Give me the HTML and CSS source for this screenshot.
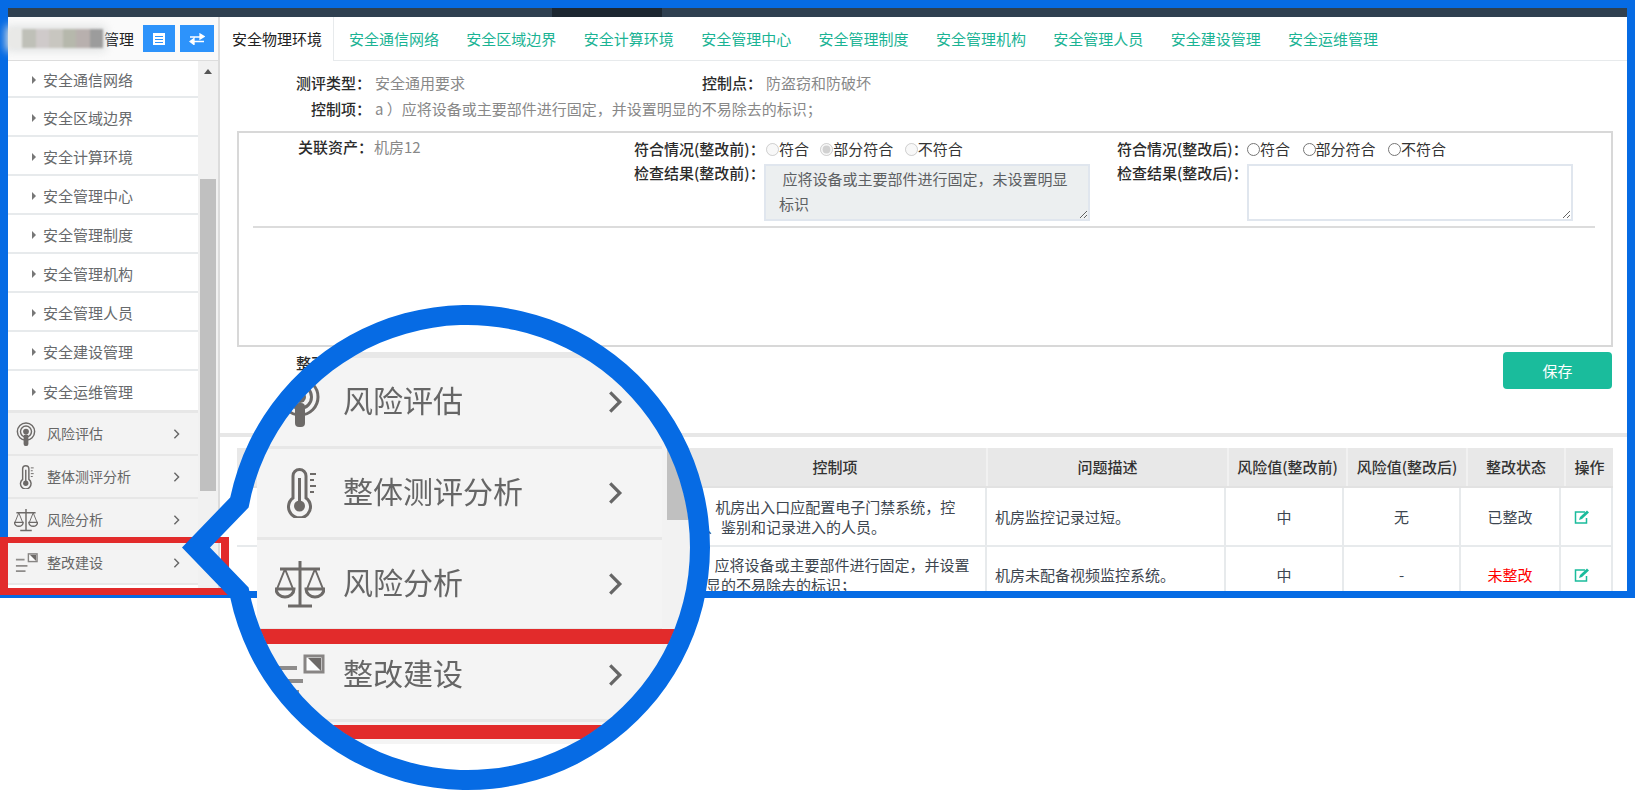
FILE: index.html
```html
<!DOCTYPE html>
<html lang="zh">
<head>
<meta charset="utf-8">
<title>整改建设</title>
<link rel="stylesheet" href="styles.css">
</head>
<body>
<svg class="defs" width="0" height="0" aria-hidden="true">
  <symbol id="i-pod" viewBox="0 0 50 50">
    <circle cx="25" cy="20" r="18" fill="none" stroke="currentColor" stroke-width="3"/>
    <circle cx="25" cy="20" r="11.5" fill="none" stroke="currentColor" stroke-width="3"/>
    <circle cx="25" cy="20" r="6" fill="currentColor"/>
    <rect x="20" y="26" width="10" height="24" rx="4" fill="currentColor"/>
  </symbol>
  <symbol id="i-thermo" viewBox="0 0 50 50">
    <path d="M18 30V8a6.500 6.500 0 0 1 13 0v22a11 11 0 1 1-13 0z" fill="none" stroke="currentColor" stroke-width="3"/>
    <circle cx="24.500" cy="38" r="5.500" fill="currentColor"/>
    <path d="M24.500 10v26" stroke="currentColor" stroke-width="3"/>
    <path d="M35 6h6M35 12h4M35 18h6M35 24h4" stroke="currentColor" stroke-width="2"/>
  </symbol>
  <symbol id="i-scale" viewBox="0 0 50 50">
    <path d="M25 2v44M13 47h24M5 10h40" stroke="currentColor" stroke-width="3" fill="none"/>
    <path d="M10 10L2 30M10 10l8 20M40 10l-8 20M40 10l8 20" stroke="currentColor" stroke-width="2" fill="none"/>
    <path d="M1 30h18a9 8 0 0 1-18 0zM31 30h18a9 8 0 0 1-18 0z" fill="none" stroke="currentColor" stroke-width="3"/>
  </symbol>
  <symbol id="i-list" viewBox="0 0 50 50">
    <path d="M4 18h18M4 31h24M4 42h20" stroke="currentColor" stroke-width="4" opacity=".75"/>
    <rect x="30" y="6" width="18" height="16" fill="#fff" stroke="currentColor" stroke-width="3" opacity=".8"/>
    <path d="M33 8h13v13z" fill="currentColor"/>
  </symbol>
  <symbol id="i-chev" viewBox="0 0 10 16">
    <polyline points="2,2 8,8 2,14" fill="none" stroke="currentColor" stroke-width="2"/>
  </symbol>
  <symbol id="i-edit" viewBox="0 0 16 14">
    <path d="M11 2H1.500v11h11V8" fill="none" stroke="currentColor" stroke-width="1.500"/>
    <path d="M5 10l1-3 7-6.500 2 2L8 9z" fill="currentColor"/>
  </symbol>
</svg>

<div class="page">
  <div class="frame">
    <div class="topbar"><span class="topbar-dark"></span></div>
    <div class="app">
      <aside class="sidebar">
        <header class="side-head">
          <div class="mosaic" aria-hidden="true">
            <i class="m0"></i><i class="m1"></i><i class="m2"></i><i class="m3"></i><i class="m4"></i><i class="m5"></i><i class="m6"></i>
          </div>
          <span class="side-title">管理</span>
          <div class="side-btns">
            <button class="sbtn sbtn-a" type="button" aria-label="列表">
              <svg viewBox="0 0 14 14" width="14" height="14"><rect x="1" y="1" width="12" height="12" fill="#fff"/><path d="M3 4.500h8M3 7.500h8M3 10.500h8" stroke="#2d93fb" stroke-width="1"/></svg>
            </button>
            <button class="sbtn sbtn-b" type="button" aria-label="切换">
              <svg viewBox="0 0 16 12" width="16" height="12"><path d="M1 4h12M11 1v5l4-2.500zM15 8.500H3M5 5.500v6L1 8.500z" stroke="#fff" stroke-width="1.300" fill="#fff"/></svg>
            </button>
          </div>
        </header>
        <div class="side-scroll">
          <nav class="menu">
            <ul class="sublist">
              <li class="sub sub-first"><span class="tri"></span>安全通信网络</li>
              <li class="sub"><span class="tri"></span>安全区域边界</li>
              <li class="sub"><span class="tri"></span>安全计算环境</li>
              <li class="sub"><span class="tri"></span>安全管理中心</li>
              <li class="sub"><span class="tri"></span>安全管理制度</li>
              <li class="sub"><span class="tri"></span>安全管理机构</li>
              <li class="sub"><span class="tri"></span>安全管理人员</li>
              <li class="sub"><span class="tri"></span>安全建设管理</li>
              <li class="sub"><span class="tri"></span>安全运维管理</li>
            </ul>
            <ul class="mainlist">
              <li class="item"><svg class="item-ic"><use href="#i-pod"/></svg><span class="item-tx">风险评估</span><svg class="item-ch"><use href="#i-chev"/></svg></li>
              <li class="item"><svg class="item-ic"><use href="#i-thermo"/></svg><span class="item-tx">整体测评分析</span><svg class="item-ch"><use href="#i-chev"/></svg></li>
              <li class="item"><svg class="item-ic"><use href="#i-scale"/></svg><span class="item-tx">风险分析</span><svg class="item-ch"><use href="#i-chev"/></svg></li>
              <li class="item"><svg class="item-ic"><use href="#i-list"/></svg><span class="item-tx">整改建设</span><svg class="item-ch"><use href="#i-chev"/></svg></li>
            </ul>
          </nav>
          <div class="track">
            <span class="track-up"></span>
            <span class="thumb"></span>
          </div>
        </div>
      </aside>

      <main class="main">
        <nav class="tabs">
          <a class="tab tab-active">安全物理环境</a>
          <a class="tab">安全通信网络</a>
          <a class="tab">安全区域边界</a>
          <a class="tab">安全计算环境</a>
          <a class="tab">安全管理中心</a>
          <a class="tab">安全管理制度</a>
          <a class="tab">安全管理机构</a>
          <a class="tab">安全管理人员</a>
          <a class="tab">安全建设管理</a>
          <a class="tab">安全运维管理</a>
        </nav>

        <section class="info">
          <div class="info-row">
            <span class="lab lab-a">测评类型：</span><span class="val val-a">安全通用要求</span>
            <span class="lab">控制点：</span><span class="val">防盗窃和防破坏</span>
          </div>
          <div class="info-row">
            <span class="lab lab-a">控制项：</span><span class="val">a ）应将设备或主要部件进行固定，并设置明显的不易除去的标识；</span>
          </div>
        </section>

        <section class="box">
          <div class="box-cols">
            <div class="col-asset"><span class="lab">关联资产：</span><span class="val">机房12</span></div>
            <div class="col-form col-before">
              <div class="form-row">
                <span class="lab form-lab">符合情况(整改前)：</span>
                <label class="opt opt-off"><input type="radio" name="b" disabled>符合</label>
                <label class="opt opt-off"><input type="radio" name="b" checked disabled>部分符合</label>
                <label class="opt opt-off"><input type="radio" name="b" disabled>不符合</label>
              </div>
              <div class="form-row form-row-b">
                <span class="lab form-lab">检查结果(整改前)：</span>
                <textarea class="ta ta-off" readonly> 应将设备或主要部件进行固定，未设置明显标识</textarea>
              </div>
            </div>
            <div class="col-form">
              <div class="form-row">
                <span class="lab form-lab">符合情况(整改后)：</span>
                <label class="opt opt-on"><input type="radio" name="a">符合</label>
                <label class="opt opt-on"><input type="radio" name="a">部分符合</label>
                <label class="opt opt-on"><input type="radio" name="a">不符合</label>
              </div>
              <div class="form-row form-row-b">
                <span class="lab form-lab">检查结果(整改后)：</span>
                <textarea class="ta"></textarea>
              </div>
            </div>
          </div>
          <hr class="box-hr">
        </section>

        <section class="advice">
          <span class="lab">整改建议：</span>
          <button class="save" type="button">保存</button>
        </section>

        <div class="divider"></div>

        <section class="tables">
          <table class="thead-t">
            <colgroup><col class="h1"><col class="h2"><col class="h3"><col class="h4"><col class="h5"><col class="h6"><col class="h7"><col class="h8"></colgroup>
            <tr><th></th><th></th><th>控制项</th><th>问题描述</th><th>风险值(整改前)</th><th>风险值(整改后)</th><th>整改状态</th><th>操作</th></tr>
          </table>
          <table class="tbody-t">
            <colgroup><col class="b1"><col class="b2"><col class="b3"><col class="b4"><col class="b5"><col class="b6"><col class="b7"><col class="b8"></colgroup>
            <tr>
              <td></td><td></td>
              <td class="tl">d）机房出入口应配置电子门禁系统，控制、鉴别和记录进入的人员。</td>
              <td class="tl">机房监控记录过短。</td>
              <td>中</td><td>无</td><td>已整改</td>
              <td class="op"><svg class="edit"><use href="#i-edit"/></svg></td>
            </tr>
            <tr>
              <td></td><td></td>
              <td class="tl">a）应将设备或主要部件进行固定，并设置明显的不易除去的标识；</td>
              <td class="tl">机房未配备视频监控系统。</td>
              <td>中</td><td>-</td><td class="bad">未整改</td>
              <td class="op"><svg class="edit"><use href="#i-edit"/></svg></td>
            </tr>
          </table>
        </section>
      </main>
    </div>
  </div>

  <div class="redbox"></div>

  <div class="lens">
    <div class="lens-menu">
      <div class="lens-top"></div>
      <div class="lens-row"><svg class="lens-ic"><use href="#i-pod"/></svg><span class="lens-tx">风险评估</span><svg class="lens-ch"><use href="#i-chev"/></svg></div>
      <div class="lens-row"><svg class="lens-ic"><use href="#i-thermo"/></svg><span class="lens-tx">整体测评分析</span><svg class="lens-ch"><use href="#i-chev"/></svg></div>
      <div class="lens-row"><svg class="lens-ic"><use href="#i-scale"/></svg><span class="lens-tx">风险分析</span><svg class="lens-ch"><use href="#i-chev"/></svg></div>
      <div class="lens-row"><svg class="lens-ic"><use href="#i-list"/></svg><span class="lens-tx">整改建设</span><svg class="lens-ch"><use href="#i-chev"/></svg></div>
      <div class="lens-foot"></div>
    </div>
    <div class="lens-track"><span class="lens-thumb"></span></div>
    <div class="lens-red"></div>
  </div>

  <svg class="ring" viewBox="0 0 1635 791" aria-hidden="true">
    <path fill-rule="evenodd" d="M230.200 497.500A242.500 242.500 0 1 1 230.200 597.500L182 547.500ZM248.600 507.500A222.500 222.500 0 1 1 248.600 587.500L210 547.500Z"/>
  </svg>
</div>
</body>
</html>
```

FILE: styles.css
```css
* { box-sizing: border-box; }
html, body { margin: 0; padding: 0; background: #fff; overflow: hidden; }
body { font: 15px/22px "Noto Sans CJK SC", "Liberation Sans", sans-serif; color: #333; }
ul { list-style: none; margin: 0; padding: 0; }
.defs { position: absolute; }

.page { position: relative; width: 1635px; height: 791px; overflow: hidden; }
.frame { height: 598px; border: 8px solid #066be4; border-bottom-width: 7px; display: flex; flex-direction: column; background: #fff; }

.topbar { height: 9px; flex: none; background: #2f4050; padding-left: 544px; }
.topbar-dark { display: block; width: 110px; height: 9px; background: #1c2731; }

.app { flex: 1; display: flex; min-height: 0; }

/* sidebar */
.sidebar { width: 212px; flex: none; display: flex; flex-direction: column; border-right: 2px solid #dcdcdc; }
.side-head { height: 44px; flex: none; display: flex; align-items: center; padding: 0 4px 0 1px; border-bottom: 1px solid #ddd; background: #fafafa; }
.mosaic { display: flex; width: 94px; height: 19px; filter: blur(1px); box-shadow: 0 0 8px 3px #e0e2e2; background: #e0e2e2; }
.mosaic i { flex: 1; display: block; }
.m0 { background: #e9e9e7; } .m1 { background: #bfc0b8; } .m2 { background: #cfcaca; } .m3 { background: #c8c6c0; }
.m4 { background: #b6b8ac; } .m5 { background: #b8b0ae; } .m6 { background: #9c9c9c; }
.side-title { margin-left: 1px; color: #222; }
.side-btns { margin-left: auto; display: flex; gap: 5px; }
.sbtn { height: 27px; border: 0; padding: 0; background: #2d93fb; display: flex; align-items: center; justify-content: center; }
.sbtn-a { width: 32px; }
.sbtn-b { width: 34px; }

.side-scroll { flex: 1; display: flex; min-height: 0; }
.menu { width: 190px; flex: none; }
.sub { height: 39px; display: flex; align-items: center; padding: 2px 0 0 24px; color: #676a6c; border-bottom: 2px solid #e7eaec; background: #fff; }
.sub-first { height: 37px; }
.tri { width: 0; height: 0; border-left: 4px solid #777; border-top: 4px solid transparent; border-bottom: 4px solid transparent; margin-right: 7px; }
.sublist .sub:last-child { border-bottom: 3px solid #e7e7e7; height: 42px; }
.item { height: 43px; display: flex; align-items: center; padding-left: 6px; font-size: 14px; color: #666; background: #f3f3f3; border-bottom: 2px solid #e7e7e7; }
.item-ic { width: 24px; height: 24px; color: #6d6a68; }
.item-tx { margin: 0 0 2px 9px; }
.item-ch { width: 7px; height: 12px; margin-left: auto; margin-right: 18px; color: #666; }

.track { flex: 1; background: #f1f1f1; display: flex; flex-direction: column; align-items: center; }
.track-up { width: 0; height: 0; margin-top: 8px; border-left: 4px solid transparent; border-right: 4px solid transparent; border-bottom: 5px solid #555; }
.thumb { width: 16px; height: 312px; margin-top: 105px; background: #c0c0c0; }

/* main */
.main { flex: 1; min-width: 0; display: flex; flex-direction: column; overflow: hidden; }
.tabs { height: 44px; flex: none; display: flex; border-bottom: 1px solid #e7eaec; }
.tab { padding: 0 13.7px; line-height: 43px; color: #1ab394; white-space: nowrap; }
.tab-active { padding: 0 11px 0 12px; margin-right: 1.25px; color: #222; background: #fff; height: 44px; border-right: 1px solid #e7eaec; }

.lab { color: #2b2b2b; font-family: "Noto Sans CJK TC", "Noto Sans CJK SC", sans-serif; font-weight: 500; white-space: nowrap; }
.val { color: #888; white-space: nowrap; }

.info { flex: none; padding-top: 9px; height: 70px; }
.info-row { display: flex; height: 26px; line-height: 26px; }
.lab-a { width: 151px; text-align: right; margin-right: 4px; }
.val-a { width: 327px; }
.lab + .val { margin-left: 4px; }
.lab-a + .val { margin-left: 0; }

.box { flex: none; height: 216px; margin: 0 14px 0 17px; border: 2px solid #d8d8d8; }
.box-cols { display: flex; padding-top: 3px; height: 91px; }
.col-asset { width: 395px; flex: none; padding: 2px 0 0 59px; line-height: 18px; }
.col-asset .val { margin-left: 1px; }
.col-before { width: 483px; flex: none; }
.form-row { display: flex; align-items: center; height: 28px; padding-bottom: 2px; }
.form-row-b { align-items: flex-start; height: 57px; padding-bottom: 0; }
.form-row-b .form-lab { margin-top: -2px; }
.form-lab { width: 130px; flex: none; }
.opt { display: inline-flex; align-items: center; margin-right: 12.5px; color: #333; white-space: nowrap; }
.opt input { width: 13px; height: 13px; margin: 0; flex: none; }
.col-before .opt { margin-right: 11.3px; }
.col-before .opt:first-of-type { margin-left: 2px; }
.ta { display: block; height: 57px; width: 326px; border: 2px solid #e0e6ee; padding: 0 13px; font: 15px/25px "Noto Sans CJK SC", "Liberation Sans", sans-serif; color: #5d6062; background: #fff; outline: 0; resize: both; overflow: hidden; }
.ta-off { background: #eceff0; }
.box-hr { margin: 2px 16px 0 14px; border: 0; border-top: 2px solid #dcdcdc; }

.advice { flex: none; height: 42px; padding: 5px 15px 0 76px; display: flex; justify-content: space-between; align-items: flex-start; }
.save { width: 109px; height: 37px; border: 0; border-radius: 4px; background: #1abc9c; color: #fff; font: 15px/37px "Noto Sans CJK SC", "Liberation Sans", sans-serif; padding: 0; }

.divider { flex: none; height: 4px; margin-top: 44px; background: #e7e7e7; }

.tables { flex: 1; min-height: 0; margin: 11px 14px 0 17px; overflow: hidden; }
table { border-collapse: collapse; table-layout: fixed; width: 100%; }
.thead-t th { height: 39px; padding: 0; background: #e8e8e8; color: #333; font-weight: 500; border-right: 2px solid #f1f1f1; border-bottom: 2px solid #e2e2e2; white-space: nowrap; }
.thead-t th:last-child { border-right: 0; }
.tbody-t { width: 1375px; }
.tbody-t td { height: 58px; padding: 0 8px; text-align: center; line-height: 20px; color: #3d4650; border-right: 2px solid #e7eaec; border-bottom: 2px solid #e7eaec; }
.tbody-t td.tl { text-align: left; }
.tbody-t td.tl:nth-child(3) { padding-left: 7px; }
.tbody-t td.bad { color: #f00; }
.tbody-t td.op { text-align: left; padding-left: 13px; }
.edit { display: block; width: 16px; height: 14px; color: #1abc9c; }
.h1 { width: 60px; } .h2 { width: 386px; } .h3 { width: 304px; } .h4 { width: 241px; }
.h5 { width: 119px; } .h6 { width: 120px; } .h7 { width: 98px; } .h8 { width: 48px; }
.b1 { width: 60px; } .b2 { width: 386px; } .b3 { width: 303px; } .b4 { width: 239px; }
.b5 { width: 118px; } .b6 { width: 117px; } .b7 { width: 100px; } .b8 { width: 52px; }

/* red highlight */
.redbox { position: absolute; left: 0; top: 537px; width: 229px; height: 58px; border: 8px solid #e22b2b; border-top-width: 6px; border-bottom-width: 7px; }

/* magnifier */
.lens { position: absolute; left: 257px; top: 305px; width: 434px; height: 485px; display: flex; background: #fff; clip-path: circle(223px at 210.5px 242.5px); }
.lens-menu { width: 405px; flex: none; padding-top: 47px; }
.lens-top { height: 6px; background: #e8e8e8; }
.lens-row { height: 91px; display: flex; align-items: center; padding-left: 18px; background: #f4f4f4; border-bottom: 3px solid #e7e7e7; color: #666; font-size: 30px; }
.lens-ic { width: 50px; height: 50px; flex: none; color: #6d6a68; filter: blur(.6px); }
.lens-tx { margin: 0 0 6px 18px; line-height: 40px; filter: blur(.5px); }
.lens-ch { width: 16px; height: 26px; margin-left: auto; margin-right: 39px; color: #666; filter: blur(.5px); }
.lens-foot { height: 22px; background: #f4f4f4; }
.lens-track { flex: 1; margin-top: 47px; height: 387px; background: #f2f2f2; padding: 98px 0 0 5px; }
.lens-thumb { display: block; height: 70px; background: #c0c0c0; }
.lens-red { position: absolute; left: 0; right: 0; top: 324px; height: 110px; border-top: 15px solid #e22b2b; border-bottom: 14px solid #e22b2b; }

.ring { position: absolute; left: 0; top: 0; width: 1635px; height: 791px; fill: #066be4; pointer-events: none; }
```
